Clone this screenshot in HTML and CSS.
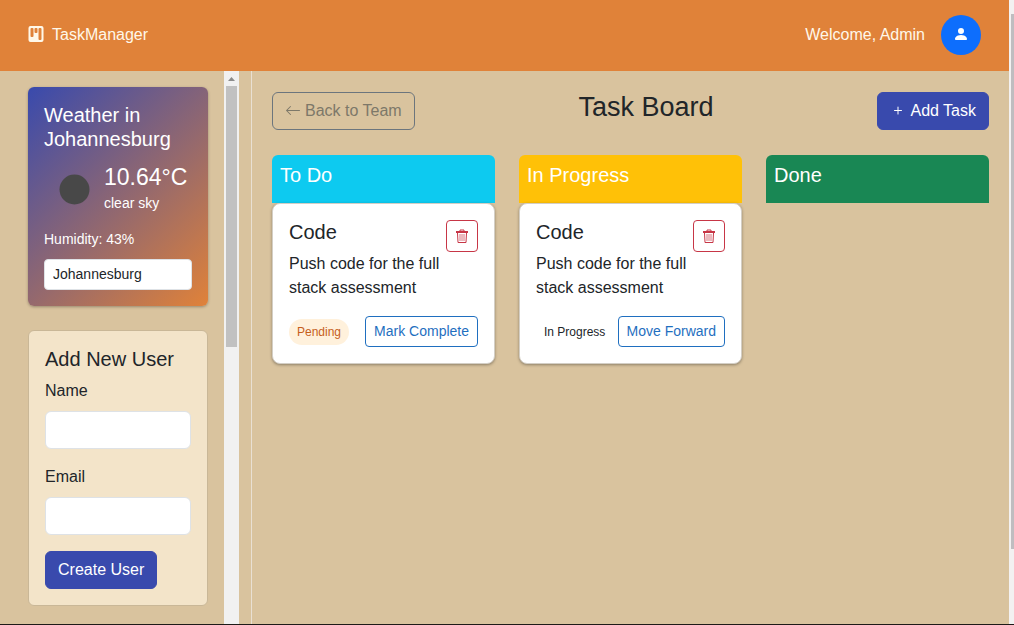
FILE: index.html
```html
<!DOCTYPE html>
<html lang="en">
<head>
<meta charset="utf-8">
<meta name="viewport" content="width=device-width, initial-scale=1">
<title>TaskManager</title>
<link rel="stylesheet" href="styles.css">
</head>
<body>
<div class="window">
  <div class="app">
    <header class="navbar">
      <a class="brand" href="#">
        <svg width="16" height="16" viewBox="0 0 16 16" fill="currentColor" aria-hidden="true"><path d="M2.500 0a2 2 0 0 0-2 2v12a2 2 0 0 0 2 2h11a2 2 0 0 0 2-2V2a2 2 0 0 0-2-2zm5 2h1a1 1 0 0 1 1 1v3a1 1 0 0 1-1 1h-1a1 1 0 0 1-1-1V3a1 1 0 0 1 1-1m-5 1a1 1 0 0 1 1-1h1a1 1 0 0 1 1 1v7a1 1 0 0 1-1 1h-1a1 1 0 0 1-1-1zm9-1h1a1 1 0 0 1 1 1v10a1 1 0 0 1-1 1h-1a1 1 0 0 1-1-1V3a1 1 0 0 1 1-1"/></svg>
        <span>TaskManager</span>
      </a>
      <div class="account">
        <span>Welcome, Admin</span>
        <button class="avatar" type="button" aria-label="Account">
          <svg width="16" height="16" viewBox="0 0 16 16" fill="currentColor" aria-hidden="true"><path d="M3 14s-1 0-1-1 1-4 6-4 6 3 6 4-1 1-1 1zm5-6a3 3 0 1 0 0-6 3 3 0 0 0 0 6"/></svg>
        </button>
      </div>
    </header>
    <div class="layout">
      <aside class="sidebar">
        <div class="sidebar-content">
          <section class="weather">
            <h2 class="card-title">Weather in Johannesburg</h2>
            <div class="weather-now">
              <svg class="weather-icon" width="60" height="60" viewBox="0 0 60 60" role="img" aria-label="Clear night"><circle cx="30.500" cy="30.500" r="15" fill="#484848"/></svg>
              <div>
                <div class="temperature">10.64°C</div>
                <div class="small">clear sky</div>
              </div>
            </div>
            <p class="humidity small">Humidity: 43%</p>
            <input class="city small" type="text" value="Johannesburg" aria-label="City">
          </section>
          <form class="new-user">
            <h2 class="card-title">Add New User</h2>
            <label for="name">Name</label>
            <input class="field" id="name" type="text">
            <label for="email">Email</label>
            <input class="field" id="email" type="email">
            <button class="btn btn-primary" type="button">Create User</button>
          </form>
        </div>
        <div class="scrollbar" aria-hidden="true">
          <svg width="15" height="15" viewBox="0 0 15 15"><path d="M4 10 7.500 6 11 10z" fill="#8b8b8b"/></svg>
          <div class="scroll-thumb"></div>
        </div>
      </aside>
      <main class="board">
        <div class="board-bar">
          <a class="btn btn-back" href="#">
            <svg width="16" height="16" viewBox="0 0 16 16" fill="currentColor" aria-hidden="true"><path fill-rule="evenodd" d="M15 7.500a.5.5 0 0 0-.5-.5H2.707l3.147-3.146a.5.5 0 1 0-.708-.708l-4 4a.5.5 0 0 0 0 .708l4 4a.5.5 0 0 0 .708-.708L2.707 8H14.500A.5.5 0 0 0 15 7.500"/></svg>
            <span>Back to Team</span>
          </a>
          <h1 class="board-title">Task Board</h1>
          <button class="btn btn-primary" type="button">
            <svg width="16" height="16" viewBox="0 0 16 16" fill="currentColor" aria-hidden="true"><path d="M8 3.500a.5.5 0 0 1 .5.5v3h3a.5.5 0 0 1 0 1h-3v3a.5.5 0 0 1-1 0V8h-3a.5.5 0 0 1 0-1h3V4A.5.5 0 0 1 8 3.500"/></svg>
            <span>Add Task</span>
          </button>
        </div>
        <div class="columns">
          <section>
            <h2 class="column-title todo">To Do</h2>
            <article class="task">
              <div class="task-head">
                <h3 class="task-title">Code</h3>
                <button class="btn-delete" type="button" aria-label="Delete task">
                  <svg width="14" height="14" viewBox="0 0 14 14" fill="none" stroke="currentColor" aria-hidden="true"><path d="M5 2V1h4v1"/><path d="M1 2h12v2H1z" fill="currentColor" stroke="none"/><path d="M2.500 4l.5 9.500h8l.5-9.500"/><path d="M5 5v7M7 5v7M9 5v7" opacity=".7"/></svg>
                </button>
              </div>
              <p class="task-text">Push code for the full stack assessment</p>
              <div class="task-foot">
                <span class="badge pending">Pending</span>
                <button class="btn-small" type="button">Mark Complete</button>
              </div>
            </article>
          </section>
          <section>
            <h2 class="column-title progress">In Progress</h2>
            <article class="task">
              <div class="task-head">
                <h3 class="task-title">Code</h3>
                <button class="btn-delete" type="button" aria-label="Delete task">
                  <svg width="14" height="14" viewBox="0 0 14 14" fill="none" stroke="currentColor" aria-hidden="true"><path d="M5 2V1h4v1"/><path d="M1 2h12v2H1z" fill="currentColor" stroke="none"/><path d="M2.500 4l.5 9.500h8l.5-9.500"/><path d="M5 5v7M7 5v7M9 5v7" opacity=".7"/></svg>
                </button>
              </div>
              <p class="task-text">Push code for the full stack assessment</p>
              <div class="task-foot">
                <span class="badge">In Progress</span>
                <button class="btn-small" type="button">Move Forward</button>
              </div>
            </article>
          </section>
          <section>
            <h2 class="column-title done">Done</h2>
          </section>
        </div>
      </main>
    </div>
  </div>
  <div class="page-scroll" aria-hidden="true"><div class="page-thumb"></div></div>
</div>
</body>
</html>
```

FILE: styles.css
```css
*, *::before, *::after {
  box-sizing: border-box;
}

body {
  margin: 0;
  color: #212529;
  background: #d9c39e;
  font: 16px/24px "Liberation Sans", Arial, sans-serif;
}

h1, h2, h3, p {
  margin: 0;
  font-weight: 400;
}

button, input {
  font: inherit;
}

a {
  color: inherit;
  text-decoration: none;
}

svg {
  flex: none;
}

.window {
  display: flex;
  min-height: 100vh;
  border-bottom: 1px solid #1c1a18;
}

.app {
  display: flex;
  flex: 1;
  flex-direction: column;
  min-width: 0;
}

.navbar {
  display: flex;
  align-items: center;
  justify-content: space-between;
  padding: 15px 28px 16px;
  color: #fff8e9;
  background: #e08239;
}

.brand, .account {
  display: flex;
  align-items: center;
}

.brand {
  gap: 8px;
}

.brand svg {
  margin-bottom: 2px;
}

.account {
  gap: 16px;
}

.avatar {
  display: flex;
  align-items: center;
  justify-content: center;
  width: 40px;
  height: 40px;
  padding: 0 0 2px;
  border: 0;
  border-radius: 50%;
  color: #fff;
  background: #0d6efd;
}

.layout {
  display: flex;
  flex: 1;
}

.sidebar {
  display: flex;
  flex: none;
  width: 252px;
  padding-right: 12px;
  border-right: 1px solid #e9e0d3;
}

.sidebar-content {
  display: flex;
  flex: 1;
  flex-direction: column;
  gap: 24px;
  padding: 16px 16px 18px 28px;
}

.card-title {
  margin-bottom: 8px;
  font-size: 20px;
}

.small {
  font-size: 14px;
}

.weather {
  padding: 16px;
  border-radius: 6px;
  color: #fff;
  background: linear-gradient(135deg, #394aad, #e08239);
  box-shadow: 0 1px 3px rgba(0, 0, 0, 0.3);
}

.weather-now {
  display: flex;
  align-items: center;
  margin-bottom: 8px;
}

.temperature {
  font-size: 23px;
  line-height: 28px;
}

.humidity {
  margin-bottom: 8px;
}

.city {
  display: block;
  width: 100%;
  height: 31px;
  padding: 3px 8px 4px;
  border: 1px solid #dee2e6;
  border-radius: 4px;
  color: #212529;
  background: #fff;
}

.new-user {
  padding: 16px;
  border: 1px solid #c9b797;
  border-radius: 6px;
  background: #f3e4c9;
}

.new-user label {
  display: block;
  margin-bottom: 8px;
}

.field {
  display: block;
  width: 100%;
  height: 38px;
  margin-bottom: 16px;
  padding: 6px 12px;
  border: 1px solid #dee2e6;
  border-radius: 6px;
  background: #fff;
}

.btn {
  display: inline-flex;
  align-items: center;
  gap: 4px;
  padding: 6px 12px;
  border: 1px solid;
  border-radius: 6px;
}

.btn-primary {
  border-color: #394aad;
  color: #fff;
  background: #394aad;
}

.btn-back {
  border-color: #6c757d;
  color: #7d7869;
}

.scrollbar {
  width: 15px;
  background: #f1f1f1;
}

.scrollbar svg {
  display: block;
}

.scroll-thumb {
  height: 261px;
  margin: 0 2px;
  background: #c1c1c1;
}

.board {
  flex: 1;
  padding: 21px 20px 20px;
}

.board-bar {
  display: flex;
  align-items: flex-start;
  justify-content: space-between;
  margin-bottom: 25px;
}

.board-title {
  font-size: 27px;
  line-height: 30px;
}

.columns {
  display: grid;
  grid-template-columns: repeat(3, minmax(0, 1fr));
  gap: 24px;
}

.column-title {
  padding: 8px 8px 16px;
  border-radius: 6px 6px 0 0;
  color: #fff;
  font-size: 20px;
}

.todo {
  background: #0dcaf0;
}

.progress {
  background: #ffc107;
}

.done {
  background: #198754;
}

.task {
  padding: 16px;
  border: 1px solid #d3cec5;
  border-radius: 8px;
  background: #fff;
  box-shadow: 0 1px 3px rgba(0, 0, 0, 0.35);
}

.task-head {
  display: flex;
  align-items: flex-start;
  justify-content: space-between;
}

.task-title {
  font-size: 20px;
}

.btn-delete {
  display: flex;
  align-items: center;
  justify-content: center;
  width: 32px;
  height: 32px;
  padding: 0;
  border: 1px solid #c73646;
  border-radius: 4px;
  color: #c73646;
  background: #fff;
}

.task-text {
  margin-bottom: 16px;
}

.task-foot {
  display: flex;
  align-items: center;
  justify-content: space-between;
}

.badge {
  padding: 4px 8px;
  border-radius: 13px;
  font-size: 12px;
  line-height: 18px;
}

.pending {
  color: #c65f1c;
  background: #fff1dc;
}

.btn-small {
  padding: 4px 8px;
  border: 1px solid #1f6fc0;
  border-radius: 4px;
  color: #1f6fc0;
  background: #fff;
  font-size: 14px;
  line-height: 21px;
}

.page-scroll {
  flex: none;
  width: 5px;
  padding: 14px 0 0 2px;
  background: #f3f1f1;
}

.page-thumb {
  height: 535px;
  background: #bfbdc0;
}
```
